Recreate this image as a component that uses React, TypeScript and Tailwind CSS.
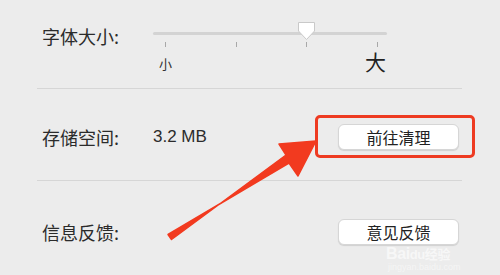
import React from 'react';

const ticks = [165, 236, 306, 377];

const SettingsButton: React.FC<{ label: string }> = ({ label }) => (
  <button className="w-[121px] h-[26px] rounded-[6px] bg-white border border-[#d6d6d6] shadow-[0_1px_1px_rgba(0,0,0,0.12)] text-[16px] leading-none text-[#222]">
    {label}
  </button>
);

const App: React.FC = () => {
  return (
    <div
      className="relative w-[500px] h-[275px] overflow-hidden bg-[#ececec] text-[#2b2b2b]"
      style={{ fontFamily: '"Noto Sans CJK SC", "Liberation Sans", sans-serif' }}
    >
      {/* Font size */}
      <div className="h-[88px] flex pl-[42px] pt-[22px]">
        <span className="w-[111px] text-[18px] leading-[28px]">字体大小:</span>
        <div className="relative w-[234px]">
          <div className="mt-[10px] h-[3px] rounded-full bg-[#d3d3d3]" />
          <div className="relative h-[10px] mt-[7px]">
            {ticks.map((x) => (
              <div key={x} className="absolute top-0 w-px h-[5px] bg-[#a8a8a8]" style={{ left: x - 153 }} />
            ))}
          </div>
          <div className="relative h-[24px] mt-[4px]">
            <span className="absolute left-[6px] top-[-2px] text-[13px] text-[#333]">小</span>
            <span className="absolute left-[212px] top-[-10px] text-[21px] text-[#222]">大</span>
          </div>
          <svg className="absolute left-[144px] top-[-1px]" width="19" height="20" viewBox="0 0 19 20">
            <path d="M1.5 1.5 H17.5 V10 L9.5 18.5 L1.5 10 Z" fill="#ffffff" stroke="#c9c9c9" strokeWidth="1" strokeLinejoin="round" />
          </svg>
        </div>
      </div>
      <div className="ml-[37px] w-[425px] h-px bg-[#d6d6d6]" />

      {/* Storage */}
      <div className="h-[91px] flex items-center pl-[42px] pt-[5px]">
        <span className="w-[111px] text-[18px]">存储空间:</span>
        <span className="w-[185px] text-[17px]" style={{ fontFamily: '"Liberation Sans", sans-serif' }}>3.2 MB</span>
        <SettingsButton label="前往清理" />
      </div>
      <div className="ml-[37px] w-[425px] h-px bg-[#d6d6d6]" />

      {/* Feedback */}
      <div className="h-[94px] flex items-center pl-[42px] pt-[8px]">
        <span className="w-[296px] text-[18px]">信息反馈:</span>
        <SettingsButton label="意见反馈" />
      </div>

      {/* annotation */}
      <div className="absolute left-[315px] top-[115px] w-[160px] h-[43px] rounded-[5px] border-[3px] border-[#ee3b22]" />
      <svg className="absolute left-0 top-0" width="500" height="275" viewBox="0 0 500 275">
        <path
          d="M168 234.5 L289 163 L298 176 L316 141 L279 144 L286 155 L171.5 239.5 Z"
          fill="#f23a1f"
          stroke="#f23a1f"
          strokeWidth="1.5"
          strokeLinejoin="round"
        />
      </svg>

      <div className="absolute left-[386px] top-[246px] leading-none text-[16px] font-bold text-white/60 tracking-tight" style={{ fontFamily: '"Liberation Sans", sans-serif' }}>
        Bai<span className="text-[13px]">du</span><span className="text-[13px]" style={{ fontFamily: '"Noto Sans CJK SC", sans-serif' }}>经验</span>
      </div>
      <div className="absolute left-[388px] top-[263px] leading-none text-[9px] text-white/50" style={{ fontFamily: '"Liberation Sans", sans-serif' }}>
        jingyan.baidu.com
      </div>
    </div>
  );
};

export default App;
